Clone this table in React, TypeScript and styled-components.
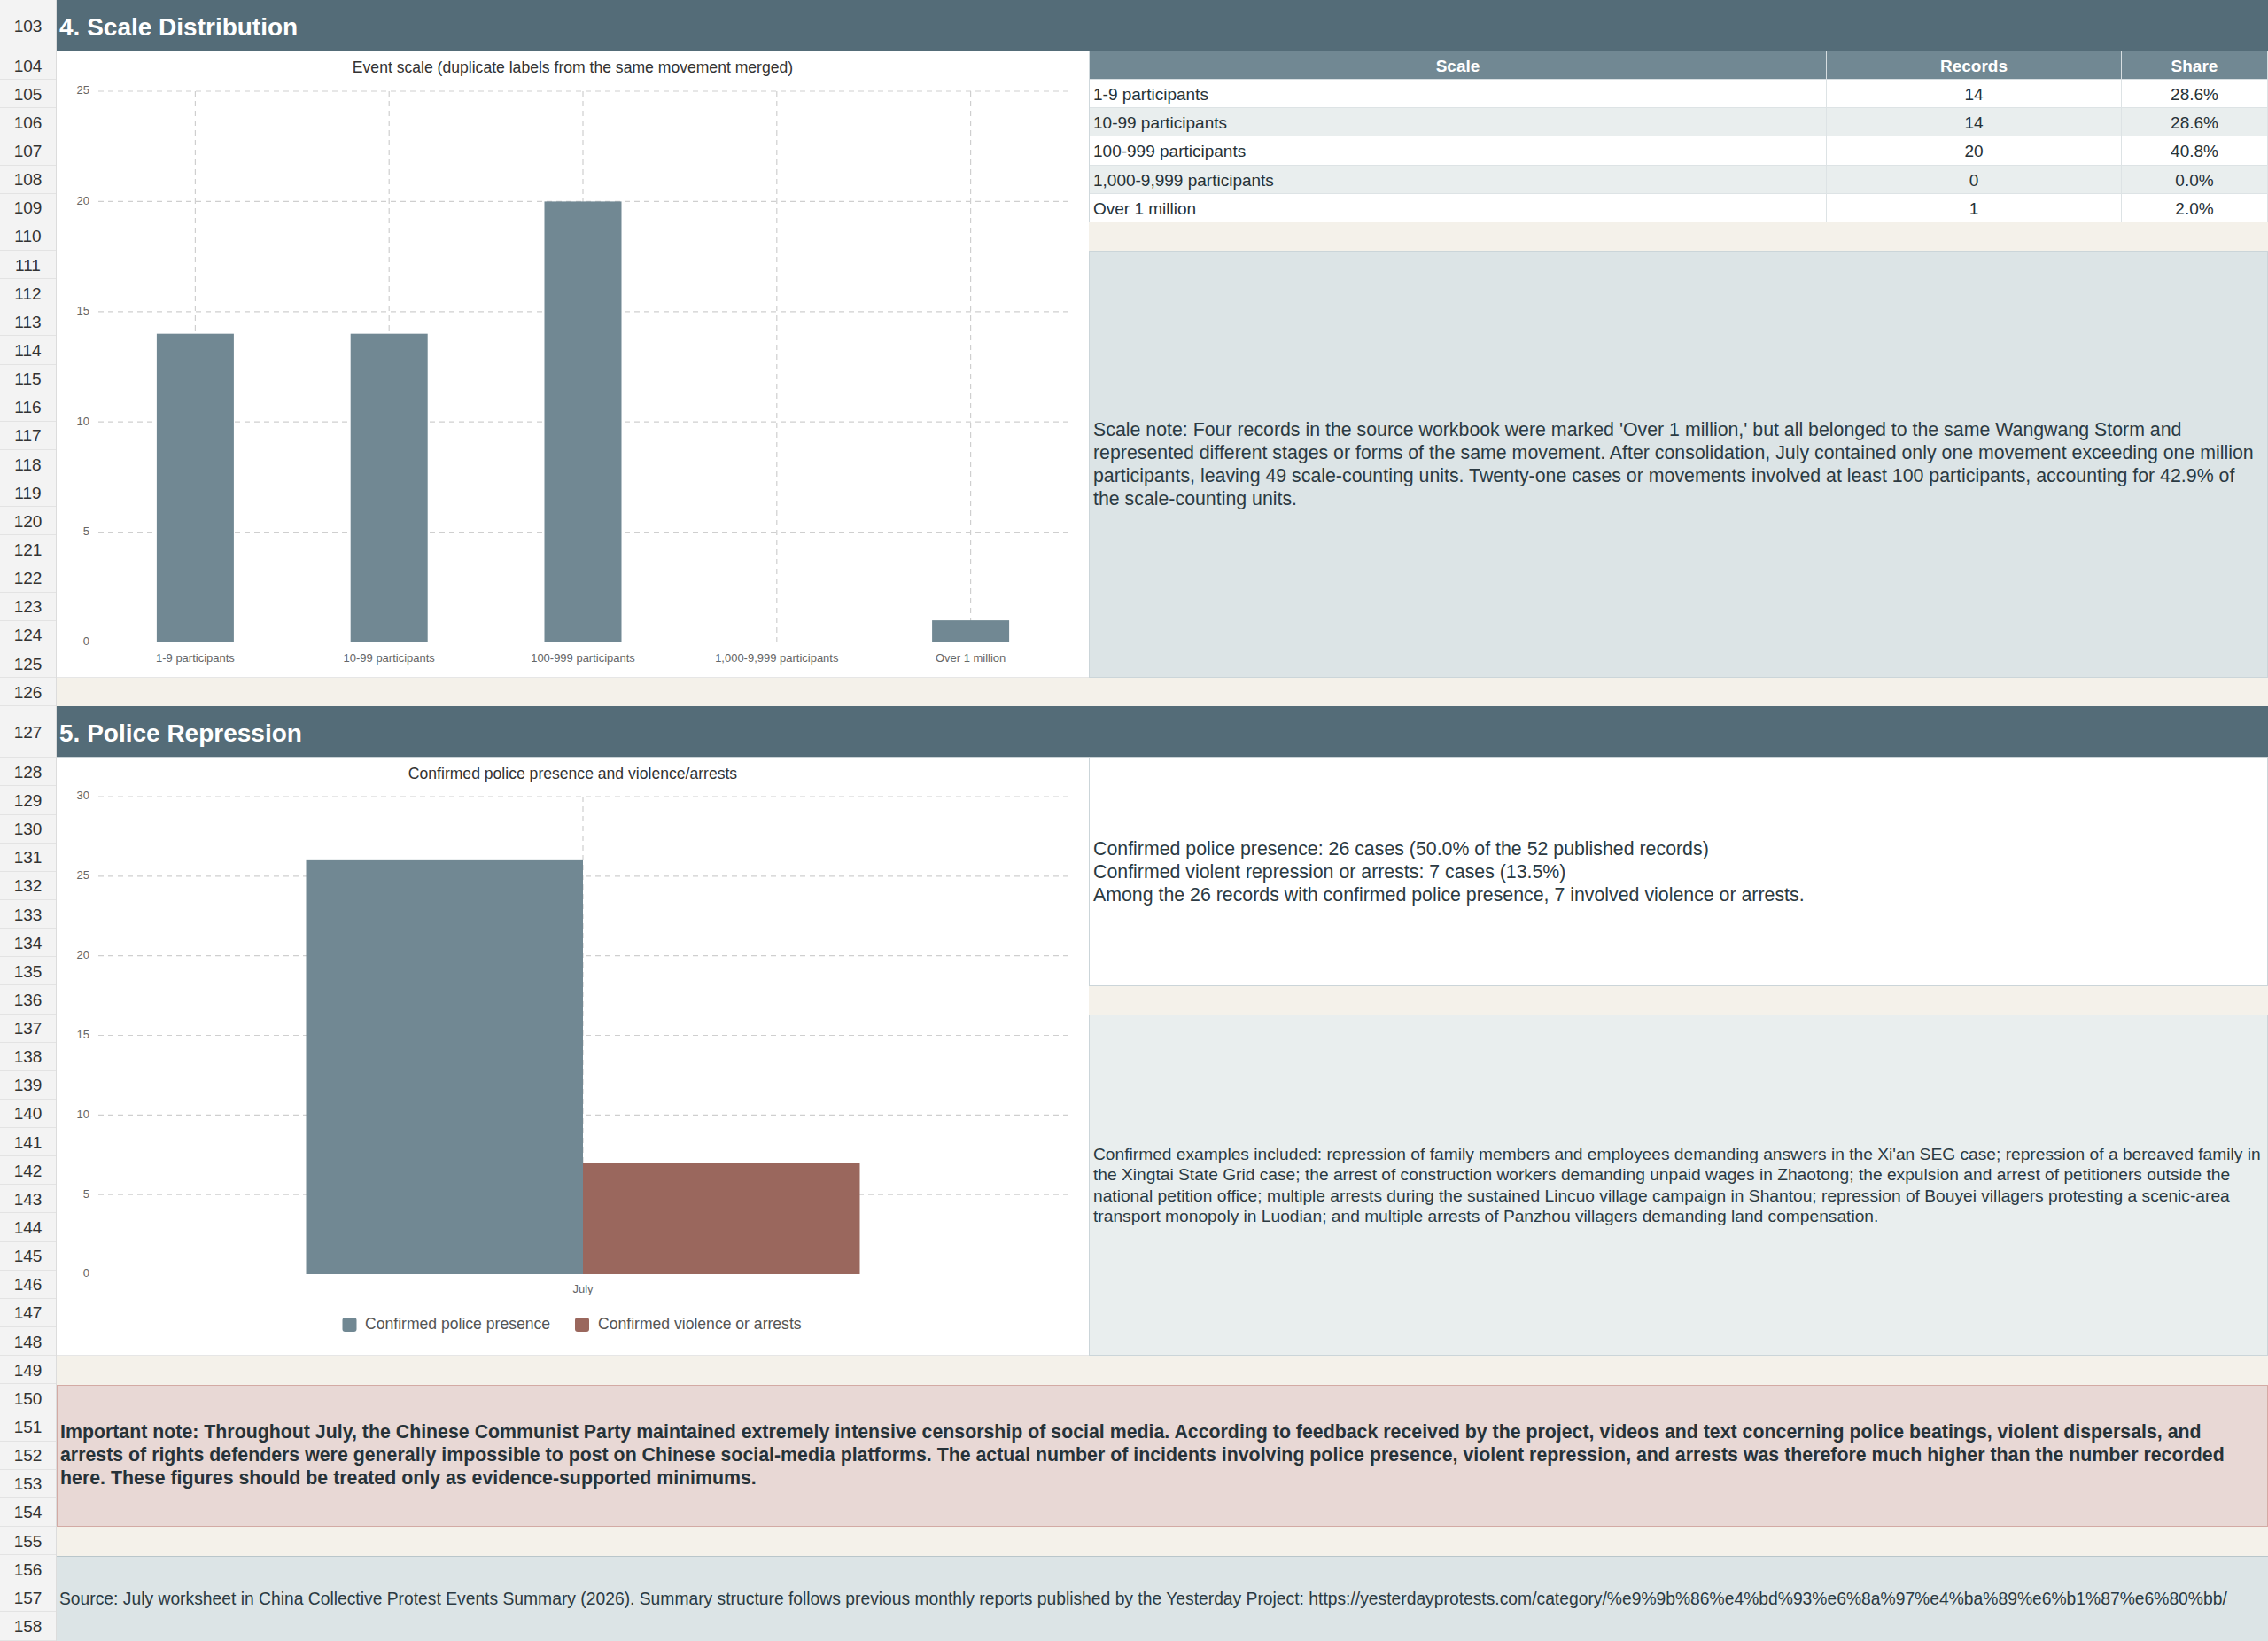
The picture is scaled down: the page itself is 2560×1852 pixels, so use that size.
import React from "react";
import styled, { createGlobalStyle } from "styled-components";

const R = 32.148;
const TALL = 58;

const GlobalStyle = createGlobalStyle`
  html, body { margin: 0; padding: 0; background: #ffffff; }
  body {
    font-family: "Liberation Sans", Arial, Helvetica, sans-serif;
    color: #263238;
  }
  * { box-sizing: border-box; }
`;

const Sheet = styled.div`
  display: grid;
  grid-template-columns: 64px 1fr;
  width: 2560px;
  height: 1852px;
  overflow: hidden;
`;

const RowHeaders = styled.div`
  display: flex;
  flex-direction: column;
  background: #f3f3f3;
  border-right: 1px solid #dcdcdc;
`;

const RowNum = styled.div<{ $tall?: boolean }>`
  height: ${(p) => (p.$tall ? TALL : R)}px;
  flex: none;
  border-bottom: 1px solid #e3e3e3;
  display: flex;
  align-items: center;
  justify-content: center;
  padding-top: 2px;
  font-size: 19px;
  color: #333;
`;

const Content = styled.div`
  display: flex;
  flex-direction: column;
  min-width: 0;
`;

const SectionHeader = styled.div`
  height: ${TALL}px;
  flex: none;
  background: #546c78;
  color: #ffffff;
  font-size: 28px;
  font-weight: 700;
  display: flex;
  align-items: center;
  padding: 4px 0 0 3px;
  border-bottom: 1px solid #c9d2d6;
`;

const SectionBody = styled.div<{ $rows: number }>`
  height: ${(p) => p.$rows * R}px;
  flex: none;
  display: grid;
  grid-template-columns: 1165px 1fr;
`;

const ChartPanel = styled.div`
  background: #ffffff;
  border-bottom: 1px solid #e6e6e6;
  overflow: hidden;
`;

const ChartSvg = styled.svg`
  display: block;
  font-family: "Liberation Sans", Arial, Helvetica, sans-serif;
`;

const SideColumn = styled.div`
  display: flex;
  flex-direction: column;
  min-width: 0;
`;

const Spacer = styled.div`
  height: ${R}px;
  flex: none;
  background: #f4f1ea;
`;

const TableGrid = styled.div`
  display: grid;
  grid-template-columns: 832px 333px 1fr;
  grid-auto-rows: ${R}px;
  border-left: 1px solid #cfd8dc;
`;

const HeadCell = styled.div`
  background: #718893;
  color: #ffffff;
  font-weight: 700;
  font-size: 19px;
  display: flex;
  align-items: center;
  justify-content: center;
  padding-top: 2px;
  border-right: 1px solid #d7dee1;
  border-bottom: 1px solid #d7dee1;
`;

const Cell = styled.div<{ $alt?: boolean; $center?: boolean }>`
  background: ${(p) => (p.$alt ? "#e9eeee" : "#ffffff")};
  font-size: 19px;
  display: flex;
  align-items: center;
  justify-content: ${(p) => (p.$center ? "center" : "flex-start")};
  padding: 3px 4px 0;
  border-right: 1px solid #dde3e5;
  border-bottom: 1px solid #dde3e5;
  white-space: nowrap;
`;

const NotePanel = styled.div<{ $rows: number; $bg: string; $size: number; $lh: number }>`
  height: ${(p) => p.$rows * R}px;
  flex: none;
  background: ${(p) => p.$bg};
  border: 1px solid #cbd5d9;
  display: flex;
  align-items: center;
  padding: 0 4px;
  font-size: ${(p) => p.$size}px;
  line-height: ${(p) => p.$lh}px;
  color: #2b3a42;
`;

const Lines = styled.div`
  display: flex;
  flex-direction: column;
`;

const ImportantBox = styled.div`
  height: ${5 * R}px;
  flex: none;
  background: #e8d8d5;
  border: 1px solid #d3aaa4;
  display: flex;
  align-items: center;
  padding: 0 12px 0 3px;
  font-size: 21.33px;
  line-height: 25.7px;
  font-weight: 700;
  color: #263238;
`;

const SourceBox = styled.div`
  height: ${3 * R}px;
  flex: none;
  background: #dce4e6;
  border-top: 1px solid #b9c6cb;
  display: flex;
  align-items: center;
  padding: 2px 3px 0;
  font-size: 19.3px;
  white-space: nowrap;
  color: #2b3a42;
`;

type Series = { name: string; color: string; values: number[] };

type ChartProps = {
  width: number;
  height: number;
  title: string;
  titleY: number;
  categories: string[];
  max: number;
  tick: number;
  left: number;
  right: number;
  top: number;
  bottom: number;
  barWidth: number;
  labelY: number;
  series: Series[];
  legend?: { y: number; items: { square: number; text: number }[] };
};

function BarChart(p: ChartProps) {
  const step = (p.right - p.left) / p.categories.length;
  const scale = (v: number) => p.bottom - (v / p.max) * (p.bottom - p.top);
  const ticks: number[] = [];
  for (let v = 0; v <= p.max; v += p.tick) ticks.push(v);
  const groupW = p.barWidth * p.series.length;
  return (
    <ChartSvg width={p.width} height={p.height} viewBox={`0 0 ${p.width} ${p.height}`}>
      <text x={p.width / 2} y={p.titleY} textAnchor="middle" dominantBaseline="middle" fontSize={17.6} fill="#333">
        {p.title}
      </text>
      {ticks.map((v) => (
        <g key={v}>
          {v > 0 && (
            <line x1={p.left} x2={p.right} y1={scale(v)} y2={scale(v)} stroke="#cfcfcf" strokeWidth={1.2} strokeDasharray="6 5" />
          )}
          <text x={p.left - 10} y={scale(v)} textAnchor="end" dominantBaseline="middle" fontSize={13} fill="#666">
            {v}
          </text>
        </g>
      ))}
      {p.categories.map((c, i) => {
        const cx = p.left + step * (i + 0.5);
        return (
          <line key={c} x1={cx} x2={cx} y1={p.top} y2={p.bottom} stroke="#cfcfcf" strokeWidth={1.2} strokeDasharray="6 5" />
        );
      })}
      {p.categories.map((c, i) => {
        const cx = p.left + step * (i + 0.5);
        return (
          <g key={c}>
            {p.series.map((s, j) => {
              const v = s.values[i];
              const x = cx - groupW / 2 + j * p.barWidth;
              const y = scale(v);
              return v > 0 ? <rect key={s.name} x={x} y={y} width={p.barWidth} height={p.bottom - y} fill={s.color} /> : null;
            })}
            <text x={cx} y={p.labelY} textAnchor="middle" dominantBaseline="middle" fontSize={13} fill="#666">
              {c}
            </text>
          </g>
        );
      })}
      {p.legend &&
        p.series.map((s, j) => {
          const it = p.legend!.items[j];
          return (
            <g key={s.name}>
              <rect x={it.square} y={p.legend!.y - 8} width={16} height={16} rx={3} fill={s.color} />
              <text x={it.text} y={p.legend!.y} dominantBaseline="middle" fontSize={17.6} fill="#555">
                {s.name}
              </text>
            </g>
          );
        })}
    </ChartSvg>
  );
}

const scaleRows = [
  { label: "1-9 participants", records: 14, share: "28.6%" },
  { label: "10-99 participants", records: 14, share: "28.6%" },
  { label: "100-999 participants", records: 20, share: "40.8%" },
  { label: "1,000-9,999 participants", records: 0, share: "0.0%" },
  { label: "Over 1 million", records: 1, share: "2.0%" },
];

const rowNumbers: { n: number; tall?: boolean }[] = [];
for (let n = 103; n <= 158; n++) rowNumbers.push({ n, tall: n === 103 || n === 127 });

export default function App() {
  return (
    <>
      <GlobalStyle />
      <Sheet>
        <RowHeaders>
          {rowNumbers.map((r) => (
            <RowNum key={r.n} $tall={r.tall}>
              {r.n}
            </RowNum>
          ))}
        </RowHeaders>
        <Content>
          <SectionHeader>4. Scale Distribution</SectionHeader>
          <SectionBody $rows={22}>
            <ChartPanel>
              <BarChart
                width={1165}
                height={22 * R}
                title="Event scale (duplicate labels from the same movement merged)"
                titleY={19}
                categories={scaleRows.map((r) => r.label)}
                max={25}
                tick={5}
                left={47}
                right={1141}
                top={45}
                bottom={667}
                barWidth={87}
                labelY={686}
                series={[{ name: "Records", color: "#718893", values: scaleRows.map((r) => r.records) }]}
              />
            </ChartPanel>
            <SideColumn>
              <TableGrid>
                <HeadCell>Scale</HeadCell>
                <HeadCell>Records</HeadCell>
                <HeadCell>Share</HeadCell>
                {scaleRows.map((r, i) => (
                  <React.Fragment key={r.label}>
                    <Cell $alt={i % 2 === 1}>{r.label}</Cell>
                    <Cell $alt={i % 2 === 1} $center>
                      {r.records}
                    </Cell>
                    <Cell $alt={i % 2 === 1} $center>
                      {r.share}
                    </Cell>
                  </React.Fragment>
                ))}
              </TableGrid>
              <Spacer />
              <NotePanel $rows={15} $bg="#dce4e6" $size={21.33} $lh={26}>
                Scale note: Four records in the source workbook were marked 'Over 1 million,' but all belonged to the same
                Wangwang Storm and represented different stages or forms of the same movement. After consolidation, July
                contained only one movement exceeding one million participants, leaving 49 scale-counting units. Twenty-one
                cases or movements involved at least 100 participants, accounting for 42.9% of the scale-counting units.
              </NotePanel>
            </SideColumn>
          </SectionBody>
          <Spacer />
          <SectionHeader>5. Police Repression</SectionHeader>
          <SectionBody $rows={21}>
            <ChartPanel>
              <BarChart
                width={1165}
                height={21 * R}
                title="Confirmed police presence and violence/arrests"
                titleY={19.5}
                categories={["July"]}
                max={30}
                tick={5}
                left={47}
                right={1141}
                top={44}
                bottom={583}
                barWidth={312.5}
                labelY={601}
                series={[
                  { name: "Confirmed police presence", color: "#718893", values: [26] },
                  { name: "Confirmed violence or arrests", color: "#9a675d", values: [7] },
                ]}
                legend={{
                  y: 640,
                  items: [
                    { square: 322.5, text: 348 },
                    { square: 585, text: 611 },
                  ],
                }}
              />
            </ChartPanel>
            <SideColumn>
              <NotePanel $rows={8} $bg="#ffffff" $size={21.33} $lh={26}>
                <Lines>
                  <span>Confirmed police presence: 26 cases (50.0% of the 52 published records)</span>
                  <span>Confirmed violent repression or arrests: 7 cases (13.5%)</span>
                  <span>Among the 26 records with confirmed police presence, 7 involved violence or arrests.</span>
                </Lines>
              </NotePanel>
              <Spacer />
              <NotePanel $rows={12} $bg="#e9eeee" $size={19.2} $lh={23.2}>
                Confirmed examples included: repression of family members and employees demanding answers in the Xi'an SEG
                case; repression of a bereaved family in the Xingtai State Grid case; the arrest of construction workers
                demanding unpaid wages in Zhaotong; the expulsion and arrest of petitioners outside the national petition
                office; multiple arrests during the sustained Lincuo village campaign in Shantou; repression of Bouyei
                villagers protesting a scenic-area transport monopoly in Luodian; and multiple arrests of Panzhou villagers
                demanding land compensation.
              </NotePanel>
            </SideColumn>
          </SectionBody>
          <Spacer />
          <ImportantBox>
            Important note: Throughout July, the Chinese Communist Party maintained extremely intensive censorship of social
            media. According to feedback received by the project, videos and text concerning police beatings, violent
            dispersals, and arrests of rights defenders were generally impossible to post on Chinese social-media platforms.
            The actual number of incidents involving police presence, violent repression, and arrests was therefore much
            higher than the number recorded here. These figures should be treated only as evidence-supported minimums.
          </ImportantBox>
          <Spacer />
          <SourceBox>
            Source: July worksheet in China Collective Protest Events Summary (2026). Summary structure follows previous
            monthly reports published by the Yesterday Project:
            https://yesterdayprotests.com/category/%e9%9b%86%e4%bd%93%e6%8a%97%e4%ba%89%e6%b1%87%e6%80%bb/
          </SourceBox>
        </Content>
      </Sheet>
    </>
  );
}
